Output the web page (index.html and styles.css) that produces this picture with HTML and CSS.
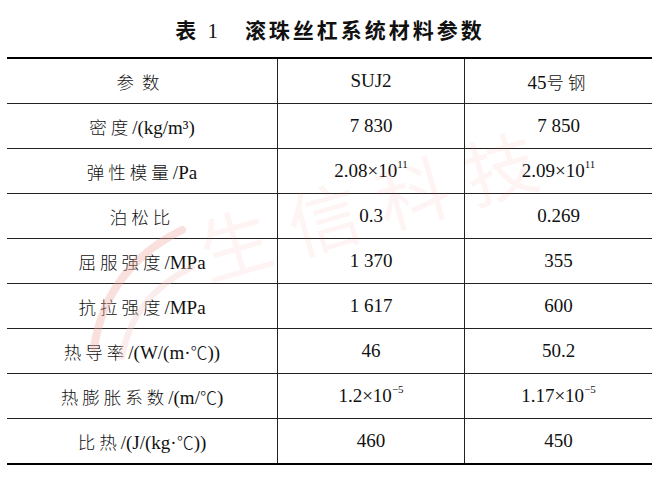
FILE: index.html
```html
<!DOCTYPE html>
<html lang="zh">
<head>
    <meta charset="UTF-8">
    <title>表 1 滚珠丝杠系统材料参数</title>
    <link rel="stylesheet" href="styles.css">
</head>
<body>

<div class="page">
    <h2 class="caption"><span class="num"><span class="cn-b">表</span> 1</span><span class="cn-b">滚珠丝杠系统材料参数</span></h2>

    <table class="params">
        <tr>
            <td><span class="cn wide">参数</span></td>
            <td>SUJ2</td>
            <td>45<span class="cn">号钢</span></td>
        </tr>
        <tr>
            <td><span class="cn">密度</span>/(kg/m³)</td>
            <td>7 830</td>
            <td>7 850</td>
        </tr>
        <tr>
            <td><span class="cn">弹性模量</span>/Pa</td>
            <td>2.08×10<sup>11</sup></td>
            <td>2.09×10<sup>11</sup></td>
        </tr>
        <tr>
            <td><span class="cn">泊松比</span></td>
            <td>0.3</td>
            <td>0.269</td>
        </tr>
        <tr>
            <td><span class="cn">屈服强度</span>/MPa</td>
            <td>1 370</td>
            <td>355</td>
        </tr>
        <tr>
            <td><span class="cn">抗拉强度</span>/MPa</td>
            <td>1 617</td>
            <td>600</td>
        </tr>
        <tr>
            <td><span class="cn">热导率</span>/(W/(m·<span class="deg">℃</span>))</td>
            <td>46</td>
            <td>50.2</td>
        </tr>
        <tr>
            <td><span class="cn">热膨胀系数</span>/(m/<span class="deg">℃</span>)</td>
            <td>1.2×10<sup>−5</sup></td>
            <td>1.17×10<sup>−5</sup></td>
        </tr>
        <tr>
            <td><span class="cn">比热</span>/(J/(kg·<span class="deg">℃</span>))</td>
            <td>460</td>
            <td>450</td>
        </tr>
    </table>

    <!-- watermark -->
    <div class="mark">
        <svg class="mark-logo" width="120" height="140" viewBox="0 0 120 140">
            <path d="M12 125 Q25 45 100 8" fill="none" stroke="#f0a8a0" stroke-width="8" stroke-linecap="round"/>
            <path d="M40 135 Q50 75 110 45" fill="none" stroke="#f6cdc8" stroke-width="6" stroke-linecap="round"/>
        </svg>
        <span class="mark-text">生信科技</span>
    </div>
</div>

</body>
</html>
```

FILE: styles.css
```css
body {
    margin: 0;
    background-color: #fff;
    font-family: "Liberation Serif", "Times New Roman", serif;
    color: #111;
}
.page {
    position: relative;
    width: 664px;
    height: 478px;
    overflow: hidden;
}
.caption {
    margin: 0;
    height: 57px;
    display: flex;
    justify-content: center;
    align-items: center;
    font-size: 21px;
    font-weight: normal;
    letter-spacing: 3px;
    padding-right: 4px;
}
.caption .num {
    margin-right: 24px;
}
.cn-b {
    font-family: "Noto Sans CJK SC", sans-serif;
    font-weight: bold;
}
.params {
    position: relative;
    z-index: 1;
    margin-left: 7px;
    width: 645px;
    border-collapse: collapse;
    border-top: 2px solid #000;
    border-bottom: 2px solid #000;
    font-size: 19px;
}
.params td {
    height: 44px;
    padding: 0;
    text-align: center;
    border-top: 1px solid #222;
    white-space: nowrap;
}
.params td:nth-child(1) {
    width: 270px;
    border-right: 1px solid #222;
}
.params td:nth-child(2) {
    width: 186px;
    border-right: 1px solid #222;
}
.params sup {
    font-size: 11px;
    vertical-align: 9px;
    line-height: 0;
}
.cn {
    font-family: "Noto Sans CJK SC", sans-serif;
    font-size: 17.5px;
    letter-spacing: 4px;
    font-weight: 300;
}
.cn.wide {
    letter-spacing: 8px;
}
.deg {
    font-family: "Noto Sans CJK SC", sans-serif;
    font-size: 17px;
    font-weight: 300;
}
.mark {
    position: absolute;
    left: 0;
    top: 0;
    width: 664px;
    height: 478px;
    z-index: 2;
    pointer-events: none;
}
.mark-logo {
    position: absolute;
    left: 82px;
    top: 222px;
    opacity: 0.35;
}
.mark-text {
    position: absolute;
    left: 200px;
    top: 215px;
    white-space: nowrap;
    font-family: "Noto Sans CJK SC", sans-serif;
    font-size: 72px;
    line-height: 1;
    letter-spacing: 20px;
    color: rgba(225, 110, 100, 0.08);
    transform: rotate(-16deg);
    transform-origin: left center;
}
```
